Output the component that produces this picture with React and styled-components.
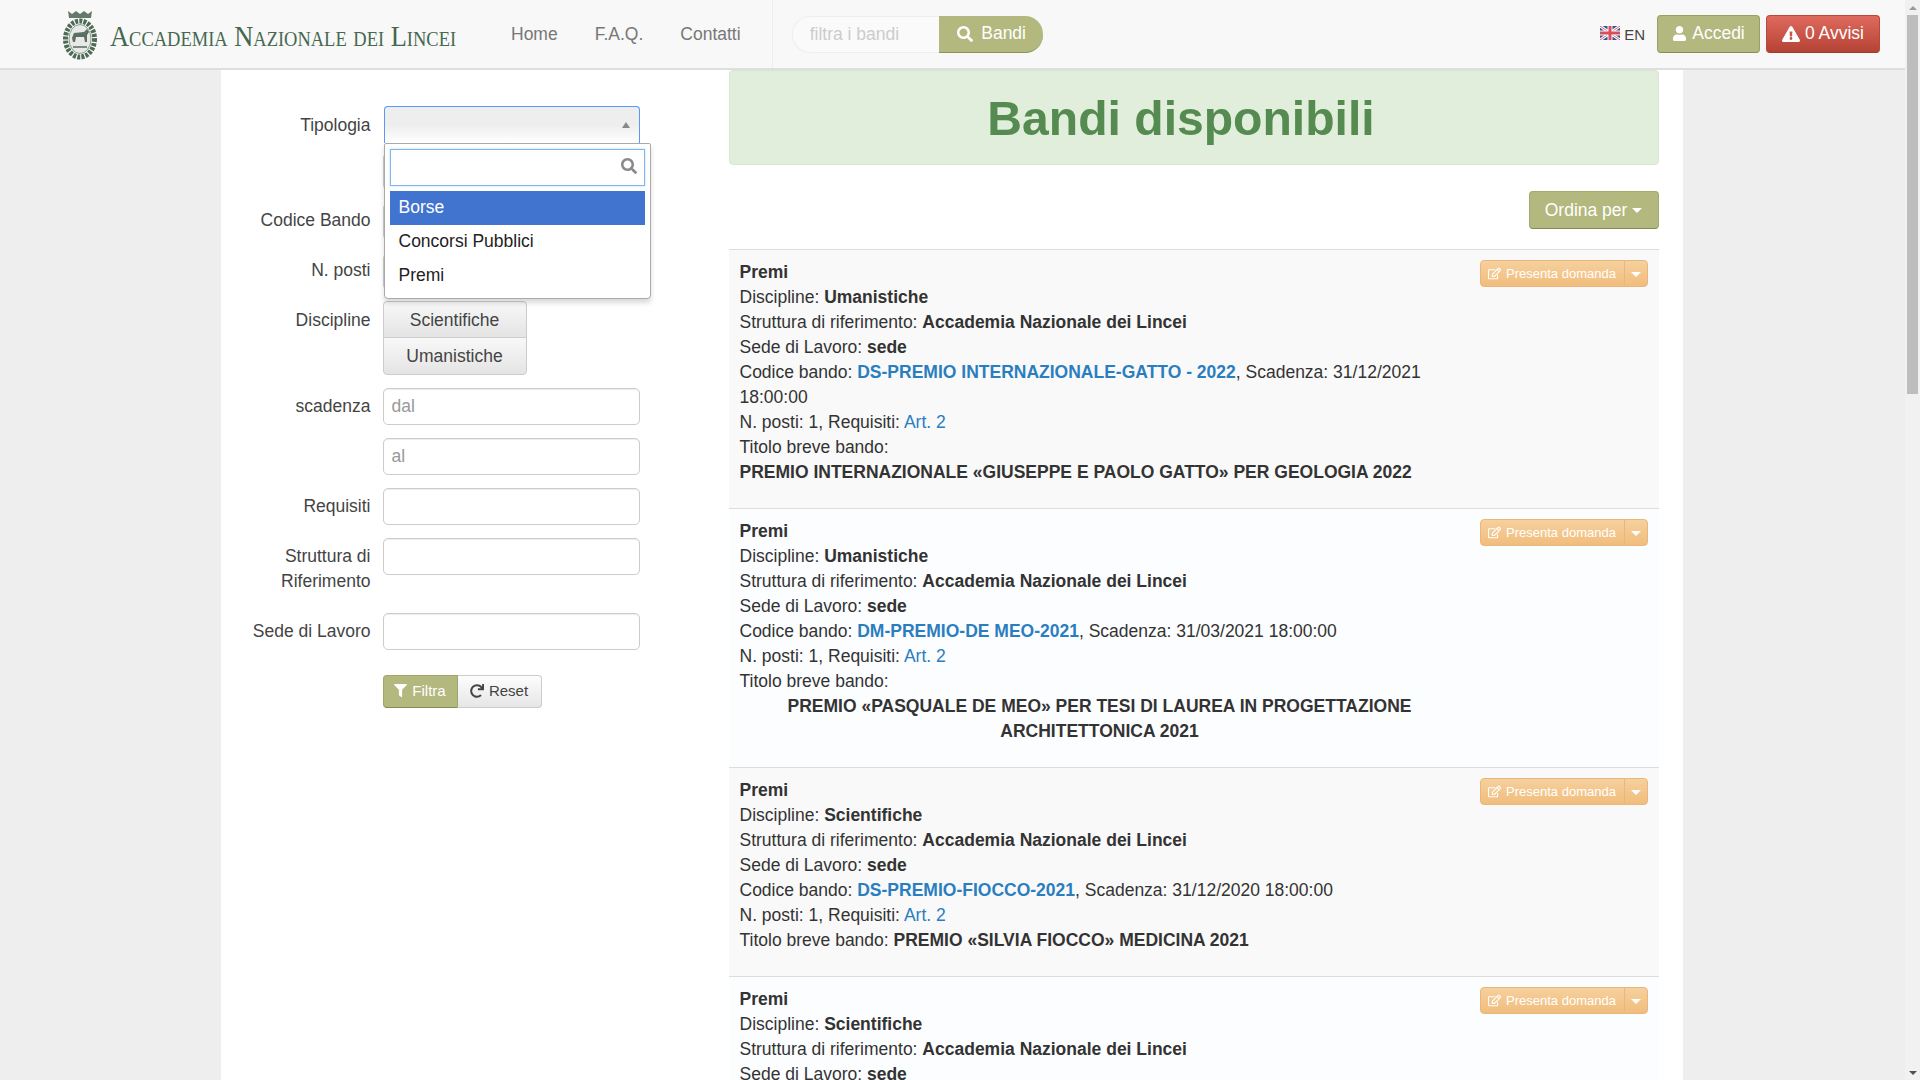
import React from "react";
import styled, { createGlobalStyle } from "styled-components";
import {
  FaUser,
  FaExclamationTriangle,
  FaSearch,
  FaFilter,
  FaRedo,
  FaRegEdit,
} from "react-icons/fa";

const bandi = [
  {
    discipline: "Umanistiche",
    code: "DS-PREMIO INTERNAZIONALE-GATTO - 2022",
    deadline: "31/12/2021 18:00:00",
    title: "PREMIO INTERNAZIONALE «GIUSEPPE E PAOLO GATTO» PER GEOLOGIA 2022",
    layout: "block",
  },
  {
    discipline: "Umanistiche",
    code: "DM-PREMIO-DE MEO-2021",
    deadline: "31/03/2021 18:00:00",
    title: "PREMIO «PASQUALE DE MEO» PER TESI DI LAUREA IN PROGETTAZIONE ARCHITETTONICA 2021",
    layout: "center",
  },
  {
    discipline: "Scientifiche",
    code: "DS-PREMIO-FIOCCO-2021",
    deadline: "31/12/2020 18:00:00",
    title: "PREMIO «SILVIA FIOCCO» MEDICINA 2021",
    layout: "inline",
  },
  {
    discipline: "Scientifiche",
    code: "DS-PREMIO-LINCEI-2021",
    deadline: "31/12/2020 18:00:00",
    title: "PREMIO LINCEI 2021",
    layout: "inline",
  },
];

const Emblem = () => (
  <svg width="36" height="50" viewBox="0 0 36 50">
    <path d="M6 1l4 3 4-3 4 3 4-3 4 3 4-3-1 7H7z" fill="#66796b" />
    <ellipse cx="18" cy="29" rx="14.5" ry="18" fill="none" stroke="#4d6b55" strokeWidth="5" strokeDasharray="3 1.2" />
    <ellipse cx="18" cy="29" rx="11" ry="14.5" fill="#e6e9e5" stroke="#8a9a8e" strokeWidth="1" />
    <path d="M10 28l2-5 10-1 3-3 2 3-2 3v7h-2l-1-5h-8l-1 5h-2z" fill="#5b6f60" />
    <path d="M11 37h14" stroke="#7c8c80" strokeWidth="2" />
  </svg>
);

const UkFlag = () => (
  <svg width="20" height="14" viewBox="0 0 20 14">
    <rect width="20" height="14" fill="#3b4f94" />
    <path d="M0 0l20 14M20 0L0 14" stroke="#fff" strokeWidth="3" />
    <path d="M0 0l20 14M20 0L0 14" stroke="#d9606a" strokeWidth="1" />
    <path d="M10 0v14M0 7h20" stroke="#fff" strokeWidth="5" />
    <path d="M10 0v14M0 7h20" stroke="#d4505c" strokeWidth="3" />
  </svg>
);

const App = () => (
  <>
    <GlobalStyle />
    <Navbar>
      <Brand>
        <Emblem />
        <BrandName>Accademia Nazionale dei Lincei</BrandName>
      </Brand>
      <NavLink>Home</NavLink>
      <NavLink>F.A.Q.</NavLink>
      <NavLink>Contatti</NavLink>
      <SearchForm>
        <SearchInput placeholder="filtra i bandi" />
        <SearchButton>
          <FaSearch size={16} /> Bandi
        </SearchButton>
      </SearchForm>
      <NavRight>
        <Lang>
          <UkFlag /> EN
        </Lang>
        <NavButton>
          <FaUser size={15} /> Accedi
        </NavButton>
        <NavButton $danger>
          <FaExclamationTriangle size={18} /> 0 Avvisi
        </NavButton>
      </NavRight>
    </Navbar>

    <Page>
      <Container>
        <Sidebar>
          <FormRow $gap={10}>
            <FieldLabel $top={7}>Tipologia</FieldLabel>
            <Control>
              <SelectBox>
                <SelectArrow />
              </SelectBox>
              <Dropdown>
                <DropdownSearch>
                  <DropdownInput />
                  <DropdownIcon>
                    <FaSearch size={16} />
                  </DropdownIcon>
                </DropdownSearch>
                <Option $active>Borse</Option>
                <Option>Concorsi Pubblici</Option>
                <Option>Premi</Option>
              </Dropdown>
            </Control>
          </FormRow>
          <FormRow>
            <FieldLabel />
            <Control>
              <TextInput />
            </Control>
          </FormRow>
          <FormRow>
            <FieldLabel $top={5}>Codice Bando</FieldLabel>
            <Control>
              <TextInput />
            </Control>
          </FormRow>
          <FormRow $gap={11}>
            <FieldLabel $top={5}>N. posti</FieldLabel>
            <Control>
              <TextInput />
            </Control>
          </FormRow>
          <FormRow>
            <FieldLabel $top={7}>Discipline</FieldLabel>
            <Control>
              <ToggleGroup>
                <ToggleButton>Scientifiche</ToggleButton>
                <ToggleButton>Umanistiche</ToggleButton>
              </ToggleGroup>
            </Control>
          </FormRow>
          <FormRow>
            <FieldLabel>scadenza</FieldLabel>
            <Control>
              <TextInput placeholder="dal" />
            </Control>
          </FormRow>
          <FormRow>
            <FieldLabel />
            <Control>
              <TextInput placeholder="al" />
            </Control>
          </FormRow>
          <FormRow>
            <FieldLabel>Requisiti</FieldLabel>
            <Control>
              <TextInput />
            </Control>
          </FormRow>
          <FormRow>
            <FieldLabel>
              Struttura di
              <br />
              Riferimento
            </FieldLabel>
            <Control>
              <TextInput />
            </Control>
          </FormRow>
          <FormRow>
            <FieldLabel>Sede di Lavoro</FieldLabel>
            <Control>
              <TextInput />
            </Control>
          </FormRow>
          <FormRow>
            <FieldLabel />
            <FormActions>
              <FilterButton>
                <FaFilter size={13} /> Filtra
              </FilterButton>
              <ResetButton>
                <FaRedo size={14} /> Reset
              </ResetButton>
            </FormActions>
          </FormRow>
        </Sidebar>

        <Content>
          <TitlePanel>
            <h1>Bandi disponibili</h1>
          </TitlePanel>
          <Toolbar>
            <SortButton>
              Ordina per <Caret />
            </SortButton>
          </Toolbar>
          {bandi.map((bando) => (
            <BandoRow key={bando.code}>
              <BandoText>
                <b>Premi</b>
                <br />
                Discipline: <b>{bando.discipline}</b>
                <br />
                Struttura di riferimento: <b>Accademia Nazionale dei Lincei</b>
                <br />
                Sede di Lavoro: <b>sede</b>
                <br />
                Codice bando: <CodeLink>{bando.code}</CodeLink>, Scadenza: {bando.deadline}
                <br />
                N. posti: 1, Requisiti: <a>Art. 2</a>
                <br />
                Titolo breve bando:{bando.layout === "inline" && <b> {bando.title}</b>}
                {bando.layout !== "inline" && <BreveTitle $center={bando.layout === "center"}>{bando.title}</BreveTitle>}
              </BandoText>
              <ActionGroup>
                <ActionMain>
                  <FaRegEdit size={13} /> Presenta domanda
                </ActionMain>
                <ActionToggle>
                  <Caret />
                </ActionToggle>
              </ActionGroup>
            </BandoRow>
          ))}
        </Content>
      </Container>
    </Page>

    <ScrollTrack>
      <ScrollArrow $up />
      <ScrollThumb />
      <ScrollArrow />
    </ScrollTrack>
  </>
);

const GlobalStyle = createGlobalStyle`
  body {
    margin: 0;
    background: #eeeeee;
    color: #333333;
    font-family: "Liberation Sans", Arial, sans-serif;
    font-size: 17.5px;
    line-height: 25px;
  }
  * {
    box-sizing: border-box;
  }
`;

const Navbar = styled.nav`
  position: fixed;
  top: 0;
  left: 0;
  right: 15px;
  z-index: 10;
  height: 70px;
  display: flex;
  align-items: center;
  background: #f8f8f8;
  border-bottom: 2px solid #dedede;
`;

const Brand = styled.div`
  flex: none;
  width: 430.5px;
  margin-left: 62px;
  display: flex;
  align-items: center;
  gap: 12px;
  margin-top: 2px;
  svg {
    flex: none;
  }
`;

const BrandName = styled.span`
  flex: none;
  font-family: "Liberation Serif", serif;
  font-variant: small-caps;
  font-size: 30px;
  white-space: nowrap;
  color: #45684f;
  transform: scaleX(0.88);
  transform-origin: left center;
`;

const NavLink = styled.a`
  padding: 0 18.5px;
  color: #777777;
`;

const SearchForm = styled.div`
  height: 68px;
  display: flex;
  align-items: center;
  margin-left: 12.5px;
  padding-left: 19px;
  border-left: 1px solid #eeeeee;
`;

const SearchInput = styled.input`
  width: 147px;
  height: 37px;
  padding: 0 17px;
  border: 1px solid #eeeeee;
  border-right: 0;
  border-radius: 18px 0 0 18px;
  background: #fafafa;
  font: inherit;
  outline: none;
  &::placeholder {
    color: #cccccc;
  }
`;

const SearchButton = styled.button`
  width: 104px;
  height: 37px;
  padding: 0 0 0 2px;
  display: flex;
  align-items: center;
  justify-content: center;
  gap: 8px;
  border: 0;
  border-bottom: 1px solid #8d9454;
  border-radius: 0 18px 18px 0;
  background: #b2b87e;
  color: #ffffff;
  font: inherit;
`;

const NavRight = styled.div`
  margin-left: auto;
  padding-right: 25px;
  display: flex;
  align-items: center;
  gap: 6px;
`;

const Lang = styled.span`
  display: flex;
  align-items: center;
  gap: 4px;
  margin-right: 6px;
  font-size: 15px;
  color: #444444;
  svg {
    margin-top: -2px;
  }
`;

const NavButton = styled.button`
  width: ${(p) => (p.$danger ? "114px" : "103px")};
  height: 38px;
  padding: 0;
  display: flex;
  align-items: center;
  justify-content: center;
  gap: 5px;
  border: 1px solid ${(p) => (p.$danger ? "#b5493c" : "#9aa164")};
  border-bottom-color: ${(p) => (p.$danger ? "#a13a2e" : "#868d50")};
  border-radius: 4px;
  background: ${(p) => (p.$danger ? "linear-gradient(#df6a5e, #b54334)" : "#b2b87e")};
  color: #ffffff;
  font: inherit;
  margin-top: -1px;
`;

const Page = styled.div`
  width: calc(100vw - 15px);
  padding-right: 2px;
`;

const Container = styled.main`
  width: 1462px;
  margin: 0 auto;
  padding-top: 70px;
  display: flex;
  background: #ffffff;
`;

const Sidebar = styled.aside`
  width: 508px;
  padding-top: 36px;
`;

const FormRow = styled.div`
  display: flex;
  align-items: flex-start;
  gap: 12px;
  margin-bottom: ${(p) => p.$gap ?? 13}px;
`;

const FieldLabel = styled.label`
  width: 150px;
  flex: none;
  padding-top: ${(p) => p.$top ?? 6}px;
  padding-bottom: ${(p) => 12 - (p.$top ?? 6)}px;
  text-align: right;
  color: #444444;
`;

const Control = styled.div`
  position: relative;
  width: 257px;
`;

const TextInput = styled.input`
  display: block;
  width: 100%;
  height: 37px;
  padding: 0 8px;
  border: 1px solid #cccccc;
  border-radius: 5px;
  box-shadow: inset 0 1px 1px rgba(0, 0, 0, 0.075);
  background: #ffffff;
  font: inherit;
  color: #555555;
  &::placeholder {
    color: #999999;
  }
`;

const SelectBox = styled.div`
  position: relative;
  height: 37px;
  margin-left: 1px;
  border: 1px solid #5897fb;
  border-bottom: 0;
  border-radius: 4px 4px 0 0;
  background: linear-gradient(#eeeeee 50%, #ffffff);
`;

const SelectArrow = styled.span`
  position: absolute;
  top: 15px;
  right: 9px;
  border: 4px solid transparent;
  border-top: 0;
  border-bottom: 6px solid #888888;
`;

const Dropdown = styled.div`
  position: absolute;
  z-index: 5;
  top: 37px;
  left: 1px;
  width: 267px;
  height: 156px;
  padding: 5px;
  border: 1px solid #aaaaaa;
  border-radius: 2px 2px 4px 4px;
  background: #ffffff;
  box-shadow: 0 4px 5px rgba(0, 0, 0, 0.15);
`;

const DropdownSearch = styled.div`
  position: relative;
  margin-bottom: 5px;
`;

const DropdownInput = styled.input`
  display: block;
  width: 100%;
  height: 37px;
  border: 1px solid #7fb8ee;
  box-shadow: 0 0 2px rgba(102, 175, 233, 0.5);
  outline: none;
`;

const DropdownIcon = styled.span`
  position: absolute;
  top: 9px;
  right: 8px;
  color: #8a8a8a;
  line-height: 0;
`;

const Option = styled.div`
  height: 34px;
  padding: 4px 9px;
  color: ${(p) => (p.$active ? "#ffffff" : "#222222")};
  background: ${(p) => (p.$active ? "#4174cf" : "transparent")};
`;

const ToggleGroup = styled.div`
  display: flex;
  flex-direction: column;
  width: 144px;
`;

const ToggleButton = styled.button`
  height: 37px;
  padding: 1px 0 0;
  border: 1px solid #cccccc;
  background: linear-gradient(#f8f8f8, #e4e4e4);
  color: #444444;
  font: inherit;
  &:first-child {
    border-radius: 4px 4px 0 0;
  }
  &:last-child {
    margin-top: -1px;
    height: 38px;
    border-radius: 0 0 4px 4px;
  }
`;

const FormActions = styled.div`
  display: flex;
  margin-top: 12px;
`;

const FilterButton = styled.button`
  width: 75px;
  height: 33px;
  padding: 0 0 2px;
  display: flex;
  align-items: center;
  justify-content: center;
  gap: 5px;
  border: 1px solid #a0a768;
  border-bottom-color: #858c50;
  border-radius: 4px 0 0 4px;
  background: #b2b87e;
  color: #ffffff;
  font: 15px "Liberation Sans", sans-serif;
`;

const ResetButton = styled.button`
  width: 84px;
  height: 33px;
  padding: 0 0 2px;
  display: flex;
  align-items: center;
  justify-content: center;
  gap: 5px;
  border: 1px solid #cccccc;
  border-left: 0;
  border-radius: 0 4px 4px 0;
  background: linear-gradient(#fdfdfd, #e6e6e6);
  color: #444444;
  font: 15px "Liberation Sans", sans-serif;
`;

const Content = styled.section`
  width: 930px;
`;

const TitlePanel = styled.div`
  height: 95px;
  padding: 2px 25px 0 0;
  display: flex;
  align-items: center;
  justify-content: center;
  border: 1px solid #d8e8d0;
  border-radius: 4px;
  background: #e1eedb;
  h1 {
    margin: 0;
    font-size: 48.1px;
    line-height: 55px;
    font-weight: bold;
    color: #558a50;
  }
`;

const Toolbar = styled.div`
  display: flex;
  justify-content: flex-end;
  margin: 26px 0 20px;
`;

const SortButton = styled.button`
  width: 130px;
  height: 38px;
  border: 1px solid #a3aa6b;
  border-bottom-color: #858c50;
  border-radius: 4px;
  background: #b2b87e;
  color: #ffffff;
  font: inherit;
`;

const Caret = styled.span`
  display: inline-block;
  vertical-align: middle;
  border: 5px solid transparent;
  border-top: 5px solid currentColor;
  border-bottom: 0;
`;

const BandoRow = styled.article`
  display: flex;
  justify-content: space-between;
  align-items: flex-start;
  padding: 10px 11px 23px 11px;
  border-top: 1px solid #dddddd;
  background: #f9f9f9;
  &:nth-of-type(even) {
    background: #fcfdff;
  }
  a {
    color: #2a7ebf;
  }
`;

const BandoText = styled.div`
  width: 720px;
`;

const CodeLink = styled.a`
  font-weight: bold;
`;

const BreveTitle = styled.div`
  font-weight: bold;
  text-align: ${(p) => (p.$center ? "center" : "left")};
  ${(p) => (p.$center ? "" : "white-space: nowrap;")}
`;

const ActionGroup = styled.div`
  display: flex;
  height: 27px;
`;

const ActionMain = styled.button`
  width: 145px;
  display: flex;
  align-items: center;
  justify-content: center;
  gap: 5px;
  border: 1px solid #e9b77c;
  border-radius: 4px 0 0 4px;
  background: linear-gradient(#f6d09d, #f1bd7d);
  color: #ffffff;
  font: 13px "Liberation Sans", sans-serif;
`;

const ActionToggle = styled.button`
  width: 24px;
  margin-left: -1px;
  padding: 0;
  border: 1px solid #e9b77c;
  border-radius: 0 4px 4px 0;
  background: linear-gradient(#f6d09d, #f1bd7d);
  color: #ffffff;
`;

/* the window's scrollbar, as it appears in the picture */
const ScrollTrack = styled.div`
  position: fixed;
  top: 0;
  right: 0;
  bottom: 0;
  z-index: 20;
  width: 15px;
  display: flex;
  flex-direction: column;
  align-items: center;
  background: #f1f1f1;
`;

const ScrollArrow = styled.span`
  flex: none;
  width: 0;
  height: 0;
  border: 4px solid transparent;
  ${(p) =>
    p.$up
      ? "margin: 6px 0 5px; border-top: 0; border-bottom: 4px solid #9a9a9a;"
      : "margin: auto 0 5px; border-bottom: 0; border-top: 4px solid #505050;"}
`;

const ScrollThumb = styled.div`
  flex: none;
  width: 11px;
  height: 379px;
  background: #bdbdbd;
`;

export default App;
